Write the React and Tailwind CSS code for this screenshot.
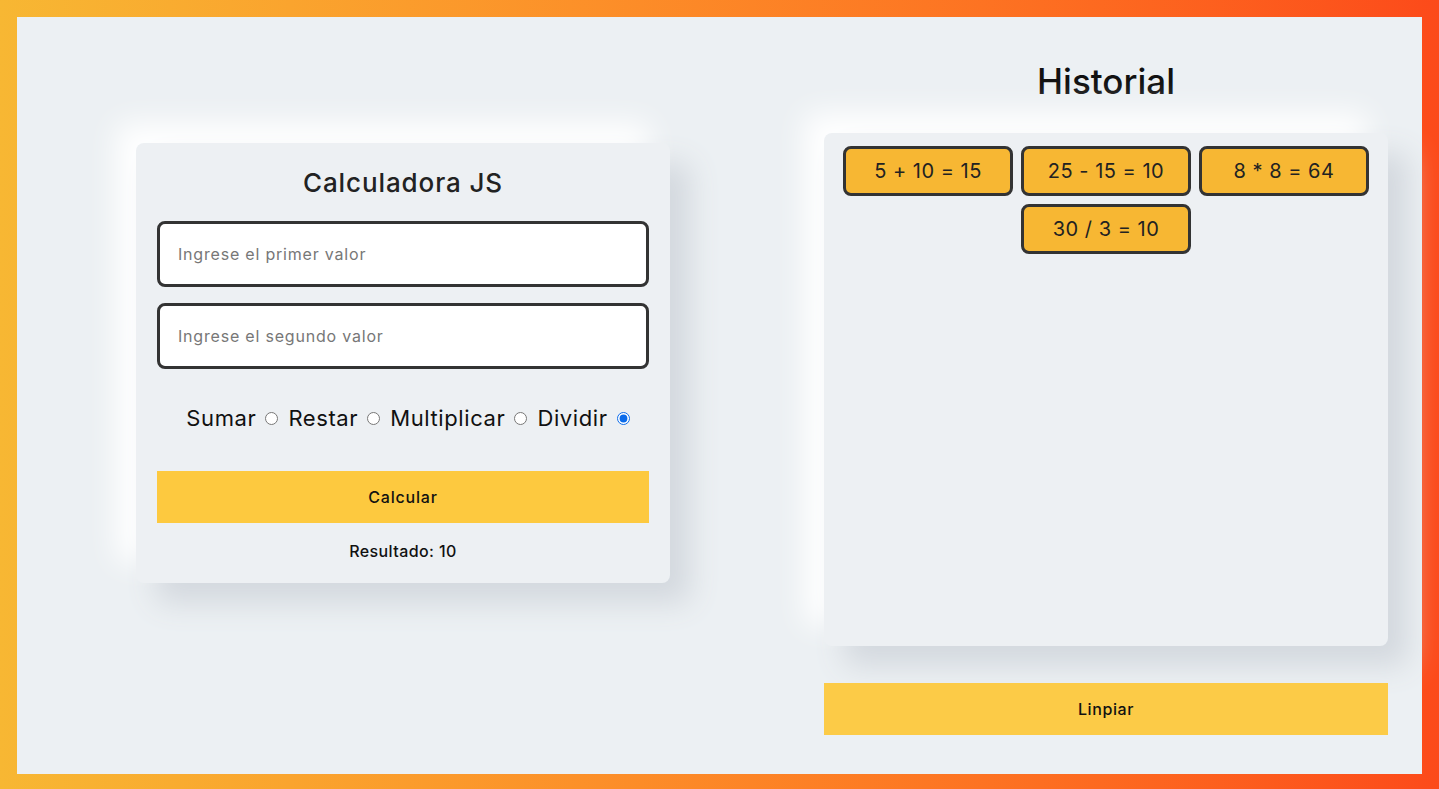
import React from 'react';

const historial = ['5 + 10 = 15', '25 - 15 = 10', '8 * 8 = 64', '30 / 3 = 10'];
const ops = ['Sumar', 'Restar', 'Multiplicar', 'Dividir'];

const App = () => {
  return (
    <div className="w-full h-[789px] p-[17px] pb-[15px] bg-gradient-to-r from-[#f7b733] to-[#fc4a1a] font-['Inter','Noto_Sans',sans-serif]">
      <div className="w-full h-full bg-[#ecf0f3] flex">
        {/* Calculadora */}
        <div className="w-[653px] shrink-0 pl-[119px] pt-[126px]">
          <div className="w-[534px] h-[440px] bg-[#edf0f3] rounded-lg shadow-[20px_20px_30px_#d3d8de,-20px_-20px_30px_#ffffff] px-[21px] pt-[24px] flex flex-col">
            <h1 className="text-center text-[26px] font-medium text-[#222] leading-[32px] tracking-[0.9px]">Calculadora JS</h1>
            <input
              type="text"
              placeholder="Ingrese el primer valor"
              className="mt-[22px] h-[66px] w-full bg-white border-[3px] border-[#333] rounded-lg px-[18px] text-[16px] tracking-[0.8px] placeholder:text-[#777] outline-none"
            />
            <input
              type="text"
              placeholder="Ingrese el segundo valor"
              className="mt-[16px] h-[66px] w-full bg-white border-[3px] border-[#333] rounded-lg px-[18px] text-[16px] tracking-[0.8px] placeholder:text-[#777] outline-none"
            />
            <div className="mt-[33px] pl-[10px] flex items-center justify-center gap-[10px] text-[22px] tracking-[0.6px] text-[#111] leading-[32px]">
              {ops.map((op) => (
                <label key={op} className="flex items-center">
                  <span>{op}</span>
                  <input
                    type="radio"
                    name="op"
                    defaultChecked={op === 'Dividir'}
                    className="ml-[9px] w-[13px] h-[13px] accent-[#0b6bea]"
                  />
                </label>
              ))}
            </div>
            <button className="mt-[37px] h-[52px] w-full bg-[#fdc93f] text-[16px] tracking-[0.8px] font-medium text-[#111]">Calcular</button>
            <p className="mt-[16px] text-center text-[16px] tracking-[0.4px] font-medium text-[#111]">Resultado: 10</p>
          </div>
        </div>

        {/* Historial */}
        <div className="flex-1 pl-[154px] pt-[42px] flex flex-col">
          <h2 className="w-[564px] text-center text-[35px] font-medium text-[#111] leading-[44px]">Historial</h2>
          <div className="mt-[30px] w-[564px] h-[513px] bg-[#edf0f3] rounded-lg shadow-[20px_20px_30px_#d3d8de,-20px_-20px_30px_#ffffff] pt-[13px] px-[18px] flex flex-wrap justify-center content-start gap-[8px]">
            {historial.map((h) => (
              <div
                key={h}
                className="w-[170px] h-[50px] bg-[#f7b733] border-[3px] border-[#333] rounded-lg flex items-center justify-center text-[20px] tracking-[0.5px] text-[#222]"
              >
                {h}
              </div>
            ))}
          </div>
          <button className="mt-[37px] w-[564px] h-[52px] bg-[#fccb47] text-[16px] tracking-[0.6px] font-medium text-[#111]">Linpiar</button>
        </div>
      </div>
    </div>
  );
};

export default App;
